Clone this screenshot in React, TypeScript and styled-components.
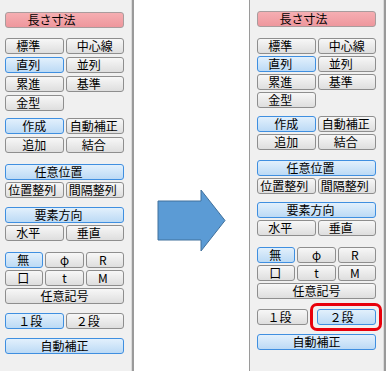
import styled, { createGlobalStyle } from 'styled-components';

type Kind = 'normal' | 'active' | 'pink';

interface BtnDef {
  label: string;
  kind?: Kind;
  shift?: number;
  wide?: boolean;
  mark?: boolean;
}

interface SectionDef {
  mt: number;
  gap: number;
  cols: string;
  colGap?: number;
  rows: BtnDef[][];
}

const GlobalStyle = createGlobalStyle`
  html, body {
    margin: 0;
    padding: 0;
    background: #fff;
  }
`;

const Page = styled.div`
  display: flex;
  width: 386px;
  height: 371px;
  background: #fff;
  overflow: hidden;
  font-family: "Noto Sans CJK JP", "Noto Sans", sans-serif;
`;

const Panel = styled.div<{ $side: 'left' | 'right' }>`
  box-sizing: border-box;
  display: flex;
  flex-direction: column;
  height: 100%;
  background: #f0f0f0;
  width: ${p => (p.$side === 'left' ? '134px' : '137px')};
  padding: ${p => (p.$side === 'left' ? '12px 8px 0 5px' : '11px 8px 0 7px')};
  border-right: 2px solid #9a9a9a;
  border-left: ${p => (p.$side === 'right' ? '1px solid #9a9a9a' : 'none')};
  box-shadow: inset -1px 0 #dadada;
`;

const Middle = styled.div`
  flex: 1;
  display: flex;
  justify-content: center;
  padding-top: 189px;
`;

const Section = styled.div<{ $mt: number; $gap: number }>`
  display: flex;
  flex-direction: column;
  margin-top: ${p => p.$mt}px;
  gap: ${p => p.$gap}px;
`;

const Row = styled.div<{ $cols: string; $colGap: number }>`
  display: grid;
  grid-template-columns: ${p => p.$cols};
  column-gap: ${p => p.$colGap}px;
`;

const Btn = styled.div<{ $kind: Kind; $shift: number; $wide: boolean }>`
  position: relative;
  box-sizing: border-box;
  height: 16px;
  grid-column: ${p => (p.$wide ? '1 / -1' : 'auto')};
  border-radius: 3px;
  border: 1px solid
    ${p => (p.$kind === 'active' ? '#3f8fe0' : p.$kind === 'pink' ? '#a99c9d' : '#8e8e8e')};
  background: ${p =>
    p.$kind === 'active'
      ? 'linear-gradient(#e2f0fc, #bcdaf5)'
      : p.$kind === 'pink'
      ? 'linear-gradient(#f6aeb2, #ee979d)'
      : 'linear-gradient(#f7f7f7, #dedede)'};
  color: #000;
  font-size: 12px;
  line-height: 14px;
  text-align: center;
  white-space: nowrap;
  padding-right: ${p => p.$shift * 2}px;
`;

// red frame drawn over the changed button
const Highlight = styled.span`
  position: absolute;
  top: -7px;
  bottom: -7px;
  left: -8px;
  right: -7px;
  border: 3px solid #e8000b;
  border-radius: 7px;
  pointer-events: none;
`;

const sections = (after: boolean): SectionDef[] => [
  { mt: 0, gap: 2, cols: '1fr', rows: [[{ label: '長さ寸法', kind: 'pink', shift: 13 }]] },
  {
    mt: after ? 11 : 10,
    gap: after ? 2 : 3,
    cols: '1fr 1fr',
    rows: [
      [{ label: '標準', shift: 6 }, { label: '中心線' }],
      [{ label: '直列', kind: 'active', shift: 6 }, { label: '並列', shift: 6 }],
      [{ label: '累進', shift: 6 }, { label: '基準', shift: 6 }],
      [{ label: '金型', shift: 6 }],
    ],
  },
  {
    mt: after ? 8 : 7,
    gap: after ? 2 : 3,
    cols: '1fr 1fr',
    rows: [
      [{ label: '作成', kind: 'active' }, { label: '自動補正', shift: 1 }],
      [{ label: '追加' }, { label: '結合', shift: 1 }],
    ],
  },
  {
    mt: after ? 10 : 11,
    gap: 2,
    cols: '1fr 1fr',
    rows: [
      [{ label: '任意位置', kind: 'active', shift: 6, wide: true }],
      [{ label: '位置整列', shift: 2 }, { label: '間隔整列', shift: 2 }],
    ],
  },
  {
    mt: after ? 8 : 9,
    gap: 2,
    cols: '1fr 1fr',
    rows: [
      [{ label: '要素方向', kind: 'active', shift: 6, wide: true }],
      [{ label: '水平', shift: 6 }, { label: '垂直', shift: 6 }],
    ],
  },
  {
    mt: 11,
    gap: 2,
    cols: '1fr 1fr 1fr',
    rows: [
      [{ label: '無', kind: 'active', shift: 1 }, { label: 'φ' }, { label: 'R', shift: 2 }],
      [{ label: '口', shift: 1 }, { label: 't' }, { label: 'M', shift: 2 }],
      [{ label: '任意記号', wide: true }],
    ],
  },
  {
    mt: after ? 10 : 9,
    gap: 2,
    cols: after ? '51px 1fr' : '1fr 1fr',
    colGap: after ? 9 : 2,
    rows: [
      after
        ? [{ label: '１段', shift: 3 }, { label: '２段', kind: 'active', shift: 5, mark: true }]
        : [{ label: '１段', kind: 'active', shift: 4 }, { label: '２段', shift: 7 }],
    ],
  },
  { mt: 9, gap: 2, cols: '1fr', rows: [[{ label: '自動補正', kind: 'active' }]] },
];

function ToolPanel({ after }: { after: boolean }) {
  return (
    <Panel $side={after ? 'right' : 'left'}>
      {sections(after).map((s, i) => (
        <Section key={i} $mt={s.mt} $gap={s.gap}>
          {s.rows.map((row, j) => (
            <Row key={j} $cols={s.cols} $colGap={s.colGap ?? 2}>
              {row.map(b => (
                <Btn
                  key={b.label}
                  $kind={b.kind ?? 'normal'}
                  $shift={b.shift ?? 0}
                  $wide={!!b.wide}
                >
                  {b.label}
                  {b.mark && <Highlight />}
                </Btn>
              ))}
            </Row>
          ))}
        </Section>
      ))}
    </Panel>
  );
}

function Arrow() {
  return (
    <svg width="70" height="63" viewBox="0 0 70 63">
      <polygon
        points="1,12 44,12 44,1 68,31.5 44,62 44,51 1,51"
        fill="#5b9bd5"
        stroke="#41719c"
        strokeWidth="1"
      />
    </svg>
  );
}

export default function App() {
  return (
    <>
      <GlobalStyle />
      <Page>
        <ToolPanel after={false} />
        <Middle>
          <Arrow />
        </Middle>
        <ToolPanel after />
      </Page>
    </>
  );
}
